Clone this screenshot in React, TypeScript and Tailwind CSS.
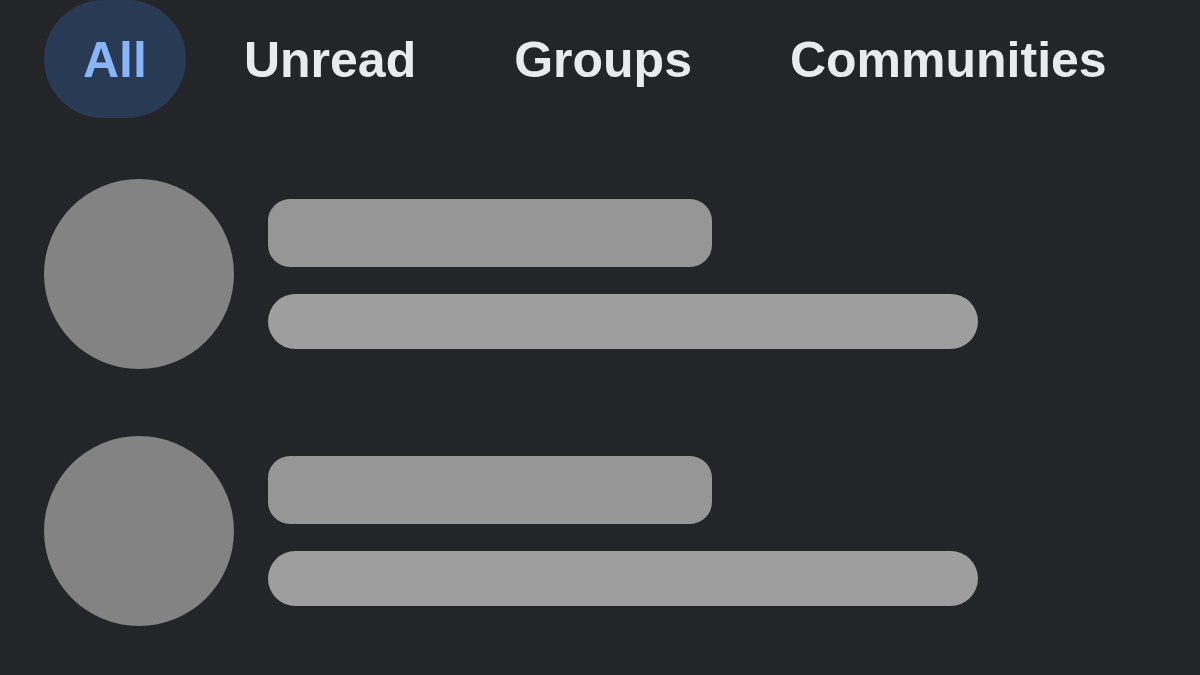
import React from 'react'

const tabs = ['All', 'Unread', 'Groups', 'Communities']

const ChatRowSkeleton = () => {
    return (
        <div className="flex items-center gap-[34px]">
            <div className="w-[190px] h-[190px] rounded-full bg-[#838384] shrink-0" />
            <div className="flex flex-col gap-[27px]">
                <div className="w-[444px] h-[68px] rounded-[22px] bg-[#969697]" />
                <div className="w-[710px] h-[55px] rounded-full bg-[#9e9e9f]" />
            </div>
        </div>
    )
}

const App = () => {
    return (
        <div className="w-[1200px] h-[675px] overflow-hidden bg-[#242528] font-['Liberation_Sans',Arial,sans-serif]">
            <div className="flex items-center pl-[44px] gap-[18px]">
                {tabs.map((tab, i) => (
                    <div
                        key={tab}
                        className={
                            i === 0
                                ? 'h-[118px] px-[39px] pt-[2px] flex items-center rounded-full bg-[#293a55] text-[#8ab4f8] text-[50px] font-bold'
                                : 'h-[118px] px-[40px] pt-[2px] flex items-center text-[#e8eaed] text-[50px] font-bold'
                        }
                    >
                        {tab}
                    </div>
                ))}
            </div>
            <div className="flex flex-col gap-[67px] pl-[44px] pt-[61px]">
                <ChatRowSkeleton />
                <ChatRowSkeleton />
            </div>
        </div>
    )
}

export default App
